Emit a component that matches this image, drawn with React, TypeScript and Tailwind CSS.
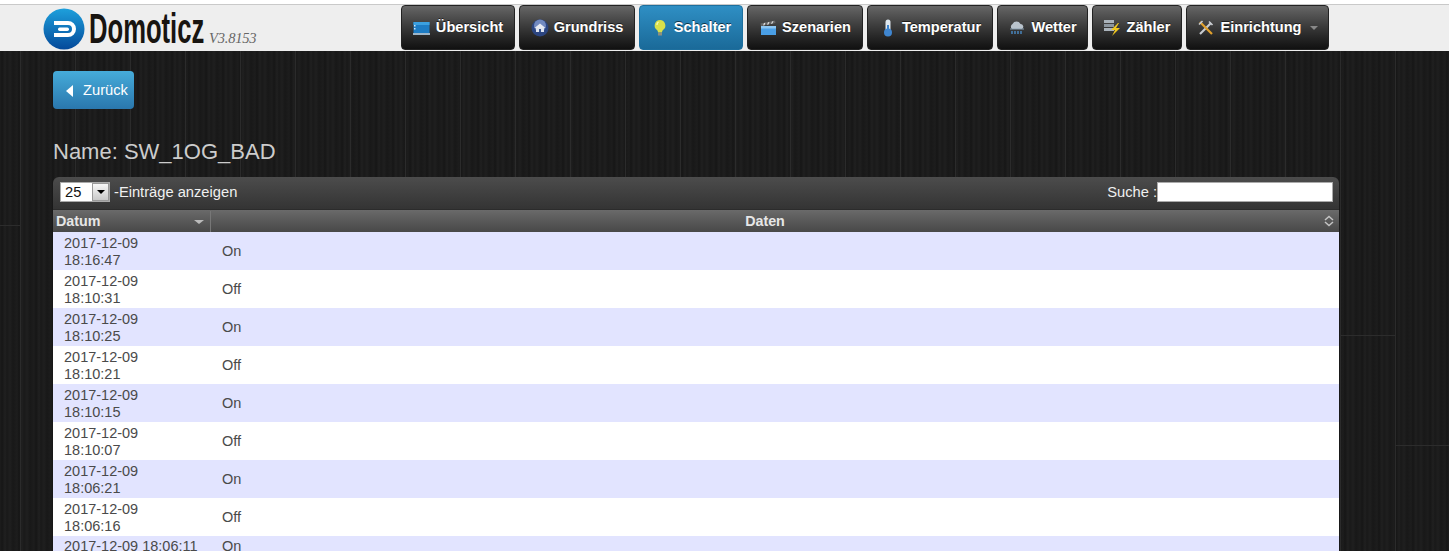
import React from "react";

const rows: [string, string][] = [
  ["2017-12-09 18:16:47", "On"],
  ["2017-12-09 18:10:31", "Off"],
  ["2017-12-09 18:10:25", "On"],
  ["2017-12-09 18:10:21", "Off"],
  ["2017-12-09 18:10:15", "On"],
  ["2017-12-09 18:10:07", "Off"],
  ["2017-12-09 18:06:21", "On"],
  ["2017-12-09 18:06:16", "Off"],
];

const Monitor = () => (
  <svg width="17" height="15" viewBox="0 0 17 15">
    <rect x="0.5" y="1" width="16" height="11" fill="#1d7cc4" />
    <rect x="0.5" y="1" width="16" height="3" fill="#3ba0e0" />
    <rect x="1" y="4" width="1.5" height="1.5" fill="#cfe8fa" />
    <rect x="1" y="7" width="1.5" height="1.5" fill="#cfe8fa" />
    <rect x="0" y="12" width="17" height="2" fill="#9fb6c8" />
  </svg>
);
const House = () => (
  <svg width="18" height="18" viewBox="0 0 18 18">
    <circle cx="9" cy="9" r="8.500" fill="#2c4580" />
    <circle cx="9" cy="6.500" r="6" fill="#7189c0" />
    <path d="M3.500 9 9 4.500 14.500 9z" fill="#e6e9f2" />
    <rect x="5" y="9" width="8" height="4" fill="#dfe4ee" />
    <rect x="8" y="10" width="2" height="3" fill="#34508f" />
  </svg>
);
const Bulb = () => (
  <svg width="14" height="18" viewBox="0 0 14 18">
    <path d="M7 1a5.500 5.500 0 0 0-3 10c.7.600 1 1.500 1 2.500h4c0-1 .3-1.900 1-2.500A5.500 5.500 0 0 0 7 1z" fill="#d8e04a" />
    <path d="M5.500 3a3 3 0 0 0-1.500 3" stroke="#f8fbc0" strokeWidth="1.200" fill="none" />
    <rect x="5" y="13.500" width="4" height="3" fill="#8d8f80" />
  </svg>
);
const Clapper = () => (
  <svg width="17" height="16" viewBox="0 0 17 16">
    <rect x="1" y="6" width="15" height="9" fill="#4a9fe6" />
    <rect x="1" y="6" width="15" height="2.500" fill="#8cc6f2" />
    <path d="M1 6 0.500 3.500 15 0.500 15.500 3z" fill="#666" />
    <path d="M3 5.500 4 3l1.500-.3-1 2.500zM7 4.700l1-2.500 1.500-.3-1 2.500zM11 3.900l1-2.500 1.500-.3-1 2.500z" fill="#ddd" />
  </svg>
);
const Thermo = () => (
  <svg width="10" height="18" viewBox="0 0 10 18">
    <rect x="2.500" y="0.500" width="5" height="13" rx="2.500" fill="#dfe8f0" />
    <circle cx="5" cy="13.500" r="4" fill="#3f86d0" />
    <rect x="4" y="6" width="2" height="7" fill="#3f86d0" />
  </svg>
);
const Cloud = () => (
  <svg width="16" height="14" viewBox="0 0 16 14">
    <path d="M3 8a3 3 0 0 1 .5-5A4.500 4.500 0 0 1 11.500 3 2.700 2.700 0 0 1 13 8z" fill="#b9c3cc" />
    <path d="M1 8h14" stroke="#8aa0b2" strokeWidth="1" />
    <path d="M3 10v3M6 10v3M9 10v3M12 10v3" stroke="#4f9be0" strokeWidth="1.200" />
  </svg>
);
const Meter = () => (
  <svg width="18" height="18" viewBox="0 0 18 18">
    <rect x="0" y="1" width="10" height="3" fill="#aab3bb" />
    <rect x="0" y="5" width="10" height="3" fill="#8c969f" />
    <rect x="0" y="9" width="10" height="3" fill="#aab3bb" />
    <path d="M14 4 7 11h4l-3 6 8-8h-4l3-5z" fill="#f1c81e" />
  </svg>
);
const Tools = () => (
  <svg width="16" height="16" viewBox="0 0 16 16">
    <path d="M2 14 13 3" stroke="#c9ccd0" strokeWidth="2.200" />
    <path d="M2 2 14 14" stroke="#e2a12c" strokeWidth="2.200" />
    <path d="M1 4.500 4.500 1" stroke="#c9ccd0" strokeWidth="1.600" />
    <path d="M11 1.500 14.500 5" stroke="#c9ccd0" strokeWidth="1.600" />
  </svg>
);

const nav: { label: string; w: string; icon: React.ReactNode; active?: boolean; caret?: boolean }[] = [
  { label: "Übersicht", w: "w-[114px]", icon: <Monitor /> },
  { label: "Grundriss", w: "w-[116px]", icon: <House /> },
  { label: "Schalter", w: "w-[104px]", icon: <Bulb />, active: true },
  { label: "Szenarien", w: "w-[116px]", icon: <Clapper /> },
  { label: "Temperatur", w: "w-[126px]", icon: <Thermo /> },
  { label: "Wetter", w: "w-[91px]", icon: <Cloud /> },
  { label: "Zähler", w: "w-[90px]", icon: <Meter /> },
  { label: "Einrichtung", w: "w-[143px]", icon: <Tools />, caret: true },
];

export default function App() {
  return (
    <div className="h-[551px] w-[1449px] overflow-hidden bg-[#1b1b1b] bg-[linear-gradient(#2c2c2c,#2c2c2c),linear-gradient(#2c2c2c,#2c2c2c),linear-gradient(#2c2c2c,#2c2c2c),repeating-linear-gradient(90deg,transparent_0px,transparent_20px,#2b2b2b_20px,#2b2b2b_21px,transparent_21px,transparent_55px),repeating-linear-gradient(90deg,#1d1d1d_0px,#161616_2px,#202020_5px,#191919_7px,#1f1f1f_10px,#181818_13px,#1d1d1d_17px)] bg-[size:55px_1px,54px_1px,20px_1px,auto,auto] bg-[position:1340px_335px,1395px_445px,0_225px,0_0,0_0] bg-no-repeat font-['Liberation_Sans',sans-serif]">
      <div className="h-[4px] bg-white" />
      <header className="flex h-[47px] items-start border-t border-[#c9c9c9] bg-[#eeeeee]">
        <div className="ml-[43px] flex h-[46px] w-[358px] items-start">
          <svg width="42" height="42" viewBox="0 0 42 42" className="mt-[3px] shrink-0">
            <defs>
              <linearGradient id="lg" x1="0" y1="0" x2="0" y2="1">
                <stop offset="0" stopColor="#1ea0dc" />
                <stop offset="1" stopColor="#04499a" />
              </linearGradient>
            </defs>
            <circle cx="21" cy="21" r="20.500" fill="url(#lg)" />
            <path d="M11 13h14a8 8 0 0 1 0 16H11v-4h14a4 4 0 0 0 0-8H11z" fill="#fff" />
            <rect x="15" y="19.500" width="11" height="3.500" rx="1.700" fill="#fff" />
          </svg>
          <span className="ml-[4px] mt-[2px] inline-block w-[115px] origin-left scale-x-[0.61] text-[42px] leading-[44px] font-bold whitespace-nowrap text-[#181410]">
            Domoticz
          </span>
          <span className="ml-[5px] mt-[23px] font-['Liberation_Serif',serif] text-[14.500px] leading-[20px] tracking-[-0.2px] text-[#666666] italic">
            V3.8153
          </span>
        </div>
        <nav className="flex gap-[4px]">
          {nav.map((n) => (
            <div
              key={n.label}
              className={`flex h-[45px] items-center justify-center gap-[5px] rounded-[4px] border pt-[1px] text-[14.600px] font-bold text-white [text-shadow:0_-1px_0_rgba(0,0,0,0.6)] ${n.w} ${
                n.active
                  ? "border-[#1d6f9e] bg-gradient-to-b from-[#2f8fc4] to-[#1a6a99]"
                  : "border-[#222222] bg-gradient-to-b from-[#666666] to-[#111111]"
              }`}
            >
              <span className="flex w-[18px] shrink-0 justify-center">{n.icon}</span>
              <span>{n.label}</span>
              {n.caret && <span className="ml-[3px] h-0 w-0 border-x-[4px] border-t-[4px] border-x-transparent border-t-[#888888]" />}
            </div>
          ))}
        </nav>
      </header>

      <main className="px-[53px] pt-[20px]">
        <button className="flex h-[38px] w-[81px] items-center rounded-[4px] bg-gradient-to-b from-[#46acda] to-[#2a77ad] pl-[13px] text-[14.700px] text-white">
          <span className="mt-[2px] mr-[10px] h-0 w-0 border-y-[6px] border-r-[7px] border-y-transparent border-r-white" />
          Zurück
        </button>

        <h2 className="mt-[30px] text-[22px] leading-[26px] text-[#cccccc]">Name: SW_1OG_BAD</h2>

        <section className="mt-[12px] w-[1286px]">
          <div className="flex h-[33px] items-center justify-between rounded-t-[6px] border-b border-[#2c2c2c] bg-gradient-to-b from-[#4c4c4c] to-[#343434] pb-[2px] pl-[7px] pr-[6px] text-[14.700px] text-[#f0f0f0]">
            <div className="flex items-center">
              <div className="flex h-[20px] w-[50px] items-center justify-between border border-[#aaaaaa] bg-white pl-[4px] text-[14.700px] text-[#111111]">
                25
                <span className="flex h-[18px] w-[17px] items-center justify-center border border-[#999999] bg-gradient-to-b from-[#f8f8f8] to-[#c9c9c9]">
                  <span className="h-0 w-0 border-x-[4px] border-t-[4px] border-x-transparent border-t-black" />
                </span>
              </div>
              <span className="ml-[4px]">-Einträge anzeigen</span>
            </div>
            <div className="flex items-center">
              <span>Suche :</span>
              <div className="h-[20px] w-[176px] border border-[#aaaaaa] bg-white" />
            </div>
          </div>

          <div className="flex h-[22px] items-center bg-gradient-to-b from-[#6a6a6a] to-[#484848] pt-[1px] text-[14.300px] font-bold text-[#e6e6e6]">
            <div className="flex h-full w-[158px] items-center justify-between border-r border-[#777777] pl-[3px] pr-[6px]">
              Datum
              <span className="h-0 w-0 border-x-[5px] border-t-[4px] border-x-transparent border-t-[#bbbbbb]" />
            </div>
            <div className="relative flex-1 pr-[20px] text-center">
              Daten
              <svg width="10" height="12" viewBox="0 0 10 12" className="absolute top-[4px] right-[5px]">
                <path d="M1 5 5 1.500 9 5M1 7l4 3.500L9 7" stroke="#c4c4c4" strokeWidth="1.500" fill="none" />
              </svg>
            </div>
          </div>

          <div className="text-[14.500px] leading-[17px] text-[#4a4a4a]">
            {rows.map(([date, value], i) => (
              <div key={date} className={`flex h-[38px] items-center ${i % 2 === 0 ? "bg-[#e2e4ff]" : "bg-white"}`}>
                <div className="w-[169px] pl-[11px] pr-[60px] pt-[1px]">{date}</div>
                <div>{value}</div>
              </div>
            ))}
            <div className="flex h-[38px] items-start bg-[#e2e4ff] pt-[2px]">
              <div className="w-[169px] pl-[11px] whitespace-nowrap">2017-12-09 18:06:11</div>
              <div>On</div>
            </div>
          </div>
        </section>
      </main>
    </div>
  );
}
